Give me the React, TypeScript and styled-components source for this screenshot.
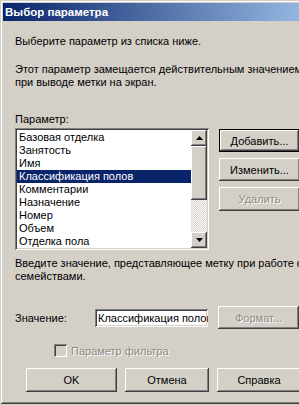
import styled, { createGlobalStyle, css } from "styled-components";

const Global = createGlobalStyle`
  html, body {
    margin: 0;
    padding: 0;
    background: #d4d0c8;
    overflow: hidden;
  }
  body {
    font-family: "Liberation Sans", Arial, sans-serif;
    font-size: 11px;
    color: #000;
  }
`;

const items = [
  "Базовая отделка",
  "Занятость",
  "Имя",
  "Классификация полов",
  "Комментарии",
  "Назначение",
  "Номер",
  "Объем",
  "Отделка пола",
];

const raised = css`
  background: #d4d0c8;
  box-shadow: inset -1px -1px #404040, inset 1px 1px #ffffff,
    inset -2px -2px #808080, inset 2px 2px #d4d0c8;
`;

const sunken = css`
  box-shadow: inset 1px 1px #808080, inset -1px -1px #ffffff,
    inset 2px 2px #404040, inset -2px -2px #d4d0c8;
`;

const Window = styled.div`
  width: 340px;
  height: 404px;
  box-sizing: border-box;
  padding: 3px 0 0 3px;
  background: #d4d0c8;
  box-shadow: inset 1px 1px #d4d0c8, inset -1px -1px #404040,
    inset 2px 2px #ffffff, inset -2px -2px #808080;
  display: flex;
  flex-direction: column;
`;

const TitleBar = styled.div`
  height: 18px;
  display: flex;
  align-items: center;
  padding-left: 2px;
  background: linear-gradient(90deg, #0a246a 0%, #a6caf0 100%);
  color: #fff;
  font-weight: bold;
  font-size: 11.5px;
`;

const Content = styled.div`
  padding: 14px 0 0 12px;
  display: flex;
  flex-direction: column;
`;

const Text = styled.div<{ $top?: number }>`
  line-height: 13px;
  margin-top: ${(p) => p.$top ?? 0}px;
  white-space: nowrap;
`;

const Middle = styled.div`
  display: flex;
  gap: 10px;
  margin-top: 2px;
`;

const ListBox = styled.div`
  width: 194px;
  height: 122px;
  box-sizing: border-box;
  padding: 2px;
  background: #fff;
  ${sunken};
  display: flex;
`;

const Items = styled.div`
  flex: 1;
  padding-top: 1px;
  overflow: hidden;
`;

const Item = styled.div<{ $selected?: boolean }>`
  height: 13px;
  line-height: 13px;
  padding-left: 2px;
  white-space: nowrap;
  background: ${(p) => (p.$selected ? "#0a246a" : "transparent")};
  color: ${(p) => (p.$selected ? "#fff" : "#000")};
`;

const ScrollBar = styled.div`
  width: 16px;
  display: flex;
  flex-direction: column;
`;

const ScrollButton = styled.div`
  width: 16px;
  height: 16px;
  ${raised};
  display: flex;
  align-items: center;
  justify-content: center;
`;

const Thumb = styled.div`
  height: 54px;
  ${raised};
`;

const Track = styled.div`
  flex: 1;
  background: repeating-conic-gradient(#ffffff 0 25%, #d4d0c8 0 50%) 0 0 / 2px
    2px;
`;

const Side = styled.div`
  display: flex;
  flex-direction: column;
  gap: 6px;
  padding-top: 1px;
`;

const Button = styled.div<{ $default?: boolean; $disabled?: boolean; $w?: number; $h?: number }>`
  width: ${(p) => p.$w ?? 81}px;
  height: ${(p) => p.$h ?? 23}px;
  box-sizing: border-box;
  display: flex;
  align-items: center;
  justify-content: center;
  ${raised};
  ${(p) =>
    p.$default &&
    css`
      box-shadow: inset 0 0 0 1px #000, inset -2px -2px #404040,
        inset 2px 2px #ffffff, inset -3px -3px #808080;
    `}
  color: ${(p) => (p.$disabled ? "#8c8a84" : "#000")};
  text-shadow: ${(p) => (p.$disabled ? "1px 1px #ffffff" : "none")};
  white-space: nowrap;
`;

const ValueRow = styled.div`
  display: flex;
  align-items: center;
  margin-top: 23px;
`;

const Label = styled.div`
  width: 80px;
`;

const Input = styled.div`
  width: 113px;
  height: 18px;
  box-sizing: border-box;
  padding: 2px 0 0 3px;
  background: #fff;
  ${sunken};
  overflow: hidden;
  white-space: nowrap;
  line-height: 14px;
  margin-right: 10px;
`;

const CheckRow = styled.div`
  display: flex;
  align-items: center;
  gap: 4px;
  margin: 15px 0 0 39px;
  color: #8c8a84;
  text-shadow: 1px 1px #ffffff;
`;

const Check = styled.div`
  width: 13px;
  height: 13px;
  background: #d4d0c8;
  ${sunken};
`;

const Footer = styled.div`
  display: flex;
  gap: 8px;
  margin: 11px 0 0 11px;
`;

const Arrow = ({ down }: { down?: boolean }) => (
  <svg width="7" height="4" viewBox="0 0 7 4">
    <path d={down ? "M0 0h7L3.5 4z" : "M0 4h7L3.5 0z"} fill="#000" />
  </svg>
);

export default function App() {
  return (
    <>
      <Global />
      <Window>
        <TitleBar>Выбор параметра</TitleBar>
        <Content>
          <Text>Выберите параметр из списка ниже.</Text>
          <Text $top={15}>Этот параметр замещается действительным значением</Text>
          <Text>при выводе метки на экран.</Text>
          <Text $top={24}>Параметр:</Text>
          <Middle>
            <ListBox>
              <Items>
                {items.map((it, i) => (
                  <Item key={it} $selected={i === 3}>
                    {it}
                  </Item>
                ))}
              </Items>
              <ScrollBar>
                <ScrollButton>
                  <Arrow />
                </ScrollButton>
                <Thumb />
                <Track />
                <ScrollButton>
                  <Arrow down />
                </ScrollButton>
              </ScrollBar>
            </ListBox>
            <Side>
              <Button $default>Добавить...</Button>
              <Button>Изменить...</Button>
              <Button $disabled $h={24}>Удалить</Button>
            </Side>
          </Middle>
          <Text $top={7}>Введите значение, представляющее метку при работе с</Text>
          <Text>семействами.</Text>
          <ValueRow>
            <Label>Значение:</Label>
            <Input>Классификация полов</Input>
            <Button $disabled>Формат...</Button>
          </ValueRow>
          <CheckRow>
            <Check />
            <span>Параметр фильтра</span>
          </CheckRow>
          <Footer>
            <Button $w={91} $h={24}>OK</Button>
            <Button $w={84} $h={24}>Отмена</Button>
            <Button $w={84} $h={24}>Справка</Button>
          </Footer>
        </Content>
      </Window>
    </>
  );
}
